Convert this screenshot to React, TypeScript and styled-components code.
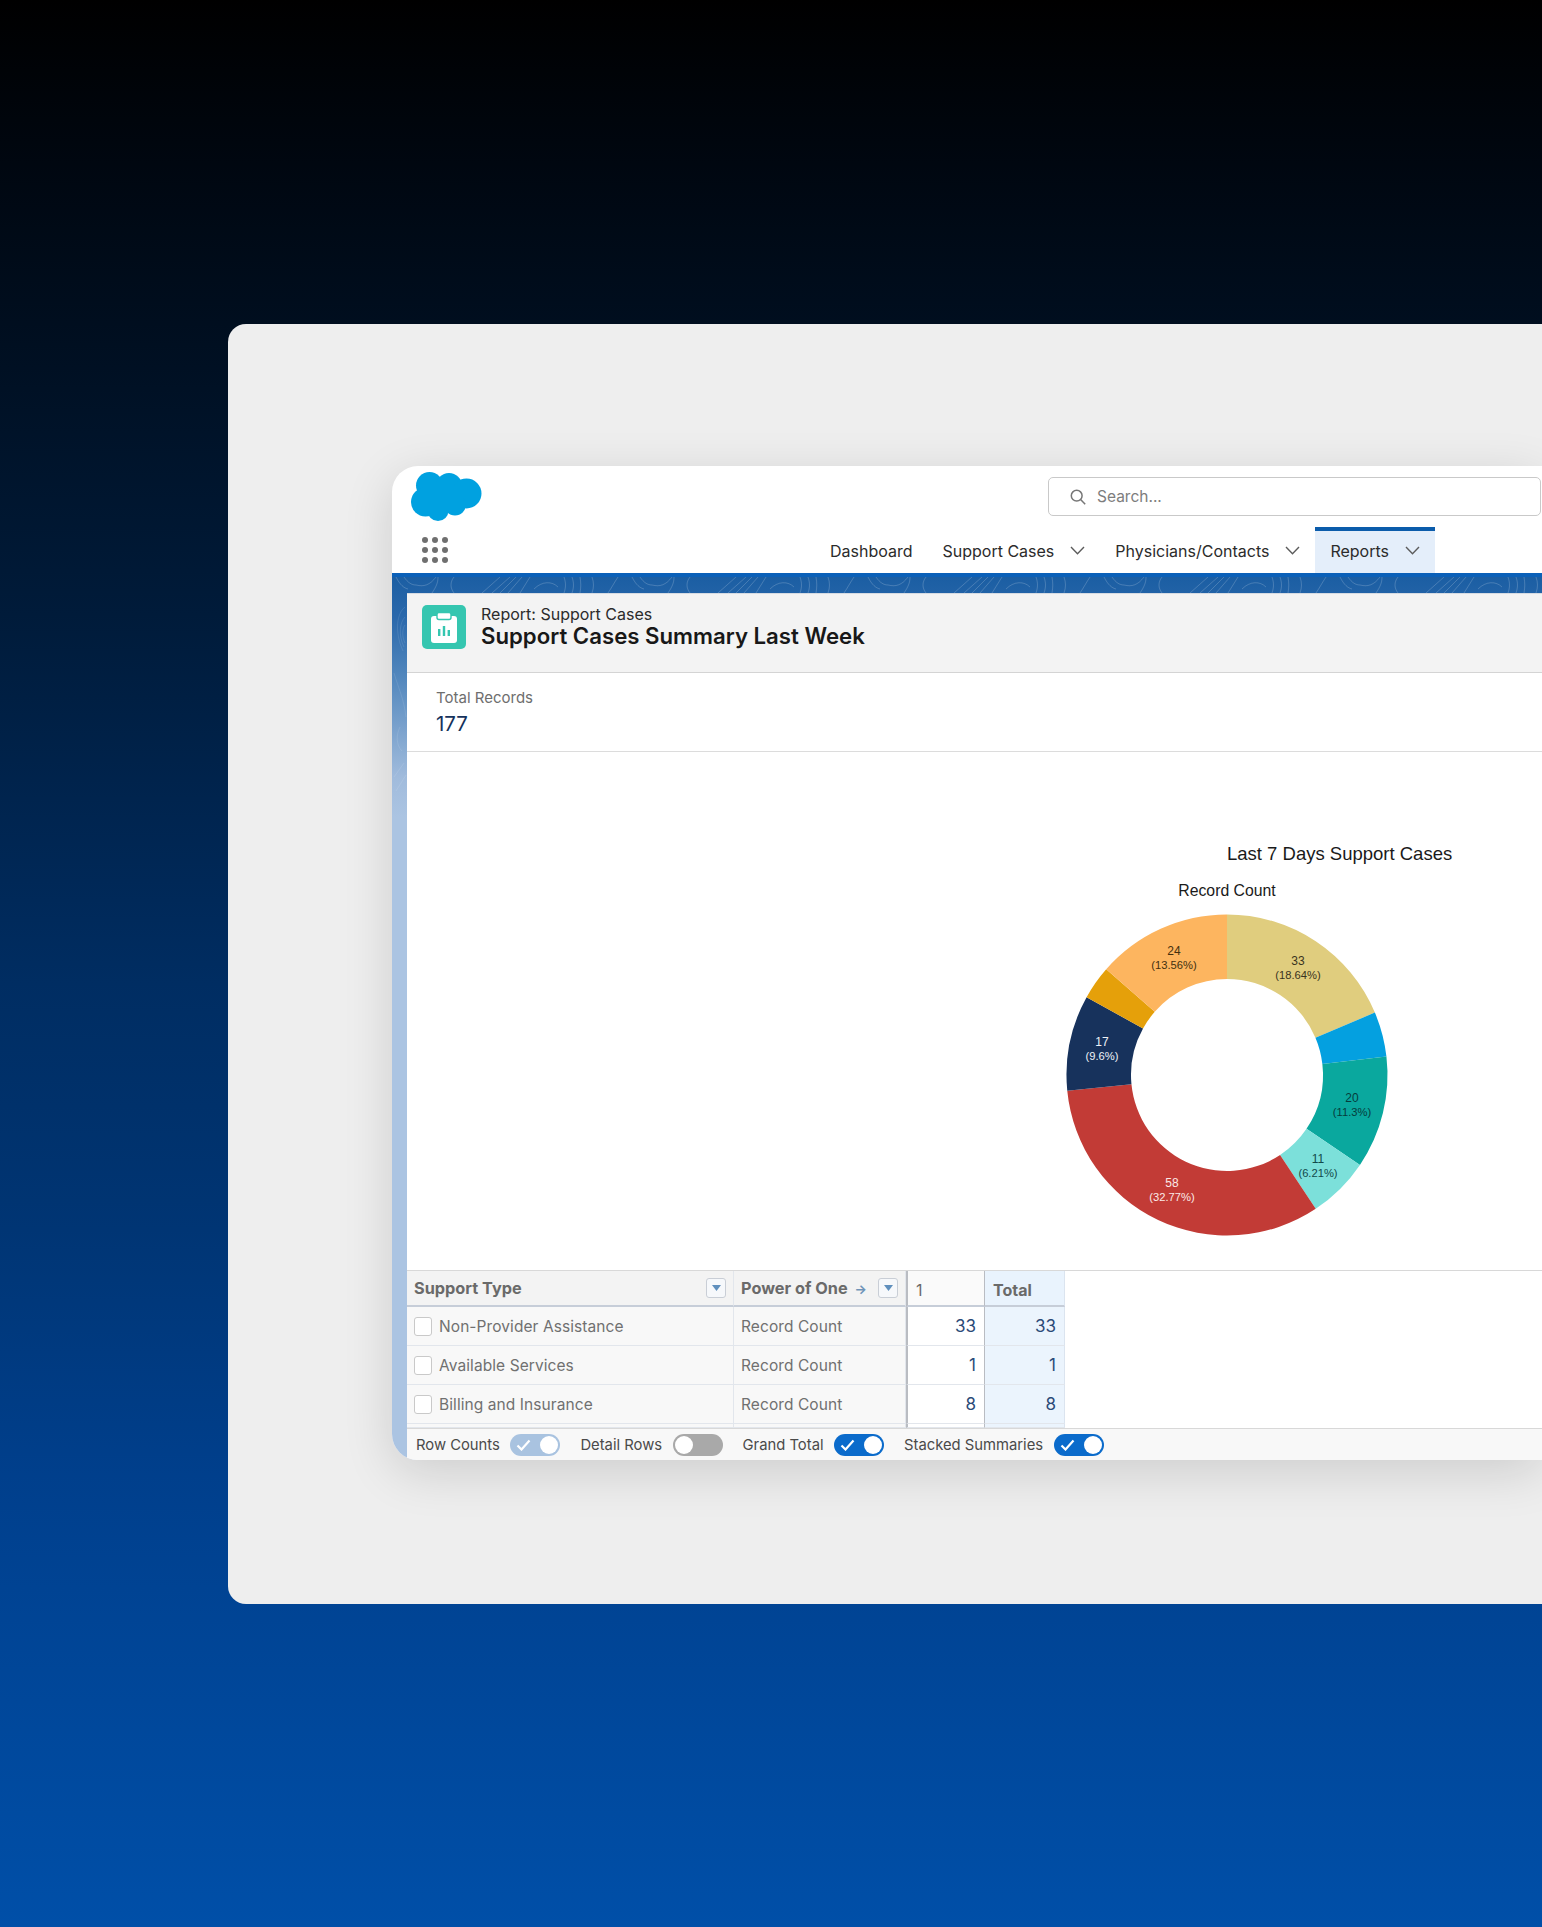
import React from 'react'
import styled, { createGlobalStyle } from 'styled-components'

const FONT = `Inter, "Liberation Sans", Arial, sans-serif`
const CHART_FONT = `"Liberation Sans", Arial, sans-serif`

const GlobalStyle = createGlobalStyle`
  html, body { margin: 0; padding: 0; background: #000; }
  * { box-sizing: border-box; }
`

// donut data, clockwise from 12 o'clock
const slices = [
  { value: 33, color: '#e0cd7e' },
  { value: 8, color: '#04a0e0' },
  { value: 20, color: '#0aa89e' },
  { value: 11, color: '#7ce0da' },
  { value: 58, color: '#c23b36' },
  { value: 17, color: '#17325c' },
  { value: 6, color: '#e5a00a' },
  { value: 24, color: '#fdb55f' },
]

const labels = [
  { x: 237, y: 135, a: '33', b: '(18.64%)', fill: '#3a3420' },
  { x: 291, y: 272, a: '20', b: '(11.3%)', fill: '#063c3c' },
  { x: 257, y: 333, a: '11', b: '(6.21%)', fill: '#12494a' },
  { x: 111, y: 357, a: '58', b: '(32.77%)', fill: '#fbe9e7' },
  { x: 41, y: 216, a: '17', b: '(9.6%)', fill: '#eef2f7' },
  { x: 113, y: 125, a: '24', b: '(13.56%)', fill: '#43300f' },
]

const rows = [
  { name: 'Non-Provider Assistance', count: 33 },
  { name: 'Available Services', count: 1 },
  { name: 'Billing and Insurance', count: 8 },
]

function slicePath(cx: number, cy: number, r1: number, r2: number, from: number, to: number) {
  const p = (r: number, t: number) => {
    const a = (t - 90) * Math.PI / 180
    return `${(cx + r * Math.cos(a)).toFixed(2)} ${(cy + r * Math.sin(a)).toFixed(2)}`
  }
  const large = to - from > 180 ? 1 : 0
  return `M${p(r2, from)} A${r2} ${r2} 0 ${large} 1 ${p(r2, to)} L${p(r1, to)} A${r1} ${r1} 0 ${large} 0 ${p(r1, from)} Z`
}

const Donut = () => {
  const total = slices.reduce((s, x) => s + x.value, 0)
  let angle = 0
  return (
    <ChartSvg viewBox="0 0 440 420" width="440" height="420">
      <text x="166" y="30" fontSize="18.5" fill="#1a1a1a">Last 7 Days Support Cases</text>
      <text x="166" y="66" fontSize="15.8" fill="#1a1a1a" textAnchor="middle">Record Count</text>
      {slices.map((s) => {
        const from = angle
        angle += (s.value / total) * 360
        return <path key={s.color} d={slicePath(166, 245, 96, 160.5, from, angle)} fill={s.color} />
      })}
      {labels.map((l) => (
        <g key={l.a} textAnchor="middle" fill={l.fill}>
          <text x={l.x} y={l.y} fontSize="12">{l.a}</text>
          <text x={l.x} y={l.y + 13.5} fontSize="11.2">{l.b}</text>
        </g>
      ))}
    </ChartSvg>
  )
}

const Chevron = () => (
  <svg width="15" height="9" viewBox="0 0 15 9" fill="none" stroke="#5c5c5c" strokeWidth="1.4">
    <path d="M1 1l6.5 6.8L14 1" />
  </svg>
)

const Toggle = ({ on, faded }: { on?: boolean; faded?: boolean }) => (
  <ToggleTrack $on={on} $faded={faded}>
    {on && (
      <svg width="15" height="12" viewBox="0 0 15 12" fill="none" stroke="#fff" strokeWidth="2.2">
        <path d="M1.5 6.5l4 4 8-9" />
      </svg>
    )}
    <ToggleKnob />
  </ToggleTrack>
)

const FilterButton = () => (
  <FilterBox>
    <svg width="9" height="6" viewBox="0 0 9 6"><path d="M0 0h9L4.5 6z" fill="#5f8fbd" /></svg>
  </FilterBox>
)

const App = () => (
  <Page>
    <GlobalStyle />
    <Panel>
      <Window>
        <TopRow>
          <Logo viewBox="0 0 71 49" width="71" height="49" fill="#00a1e0">
            <circle cx="18.5" cy="13.5" r="13.5" />
            <circle cx="38" cy="14" r="13" />
            <circle cx="55.5" cy="21.5" r="15" />
            <circle cx="14.5" cy="30" r="14.5" />
            <circle cx="27" cy="38.5" r="10.5" />
            <circle cx="44" cy="32.5" r="11" />
            <rect x="16" y="14" width="36" height="24" />
          </Logo>
          <SearchBox>
            <svg width="16" height="16" viewBox="0 0 16 16" fill="none" stroke="#777" strokeWidth="1.5">
              <circle cx="6.7" cy="6.7" r="5.4" />
              <path d="M10.6 10.6l4.6 4.7" />
            </svg>
            <SearchText>Search...</SearchText>
          </SearchBox>
        </TopRow>
        <NavRow>
          <AppGrid viewBox="0 0 26 26" width="26" height="26" fill="#6f6f6f">
            {[3, 13, 23].map((y) => [3, 13, 23].map((x) => <circle key={`${x}-${y}`} cx={x} cy={y} r="3" />))}
          </AppGrid>
          <NavList>
            <NavItem>Dashboard</NavItem>
            <NavItem>Support Cases <Chevron /></NavItem>
            <NavItem>Physicians/Contacts <Chevron /></NavItem>
            <NavItem $active>Reports <Chevron /></NavItem>
          </NavList>
        </NavRow>
        <Stage>
          <Texture width="1150" height="240" aria-hidden="true">
            <defs>
              <pattern id="rings" width="236" height="16" patternUnits="userSpaceOnUse">
                <g fill="none" stroke="#fff" strokeOpacity=".18" strokeWidth="1">
                  <path d="M4 0c4 8 8 11 12 12M12 0c4 6 8 8 12 8M24 8c8 2 14 0 20-8M40 16c4-6 6-10 6-16M62 16c-4-5-4-11 0-16" />
                  <path d="M90 16l18-16M100 16l18-16M108 16l16-16M116 16l14-16M128 16l10-16M142 12c8-8 18-8 24-2M172 16c2-6 2-10 0-16M180 16c2-6 2-10 0-16M188 16c1-6 1-10 0-16M200 16c2-6 2-10 0-16M216 16c4-6 6-10 10-16" />
                </g>
              </pattern>
            </defs>
            <rect width="1150" height="16" fill="url(#rings)" />
            <g fill="none" stroke="#fff" strokeOpacity=".1" strokeWidth="1">
              <path d="M13 30c-8 6-11 24-2 44M13 40c-5 5-7 18-1 30M13 48c-3 4-3 12 0 18M2 96c4 14 10 26 12 44M8 150c-4 8-4 18 2 24M2 200l10-14M4 214l10-16" />
            </g>
          </Texture>
          <Content>
            <PageHeader>
              <HeaderIcon viewBox="0 0 44 44" width="44" height="44">
                <rect width="44" height="44" rx="5" fill="#35c6b0" />
                <rect x="9" y="11" width="26" height="27" rx="3" fill="#fff" />
                <rect x="15" y="7.5" width="14" height="7" rx="2" fill="#fff" stroke="#35c6b0" strokeWidth="1.4" />
                <path d="M16 24h2.4v7H16zM20.8 21h2.4v10h-2.4zM25.6 25h2.4v6h-2.4z" fill="#35c6b0" />
              </HeaderIcon>
              <div>
                <ObjectName>Report: Support Cases</ObjectName>
                <ReportTitle>Support Cases Summary Last Week</ReportTitle>
              </div>
            </PageHeader>
            <Stats>
              <StatLabel>Total Records</StatLabel>
              <StatValue>177</StatValue>
            </Stats>
            <ChartArea>
              <Donut />
            </ChartArea>
            <Table>
              <HeadCell>
                Support Type
                <FilterButton />
              </HeadCell>
              <HeadCell>
                <span>Power of One <HeadArrow>→</HeadArrow></span>
                <FilterButton />
              </HeadCell>
              <ValueHead>1</ValueHead>
              <TotalHead>Total</TotalHead>
              {rows.map((r) => (
                <React.Fragment key={r.name}>
                  <NameCell><Checkbox />{r.name}</NameCell>
                  <NameCell>Record Count</NameCell>
                  <NumberCell>{r.count}</NumberCell>
                  <NumberCell $total>{r.count}</NumberCell>
                </React.Fragment>
              ))}
              <NameCell />
              <NameCell />
              <NumberCell />
              <NumberCell $total />
            </Table>
            <Footer>
              <FooterLabel>Row Counts</FooterLabel>
              <Toggle on faded />
              <FooterLabel>Detail Rows</FooterLabel>
              <Toggle />
              <FooterLabel>Grand Total</FooterLabel>
              <Toggle on />
              <FooterLabel>Stacked Summaries</FooterLabel>
              <Toggle on />
            </Footer>
          </Content>
        </Stage>
      </Window>
    </Panel>
  </Page>
)

const Page = styled.div`
  width: 1542px;
  height: 1927px;
  overflow: hidden;
  padding: 324px 0 0 228px;
  font-family: ${FONT};
  background: linear-gradient(180deg, #000 0, #00050c 120px, #001b3a 614px, #002d62 983px, #003574 1229px, #003f8c 1475px, #004fa8 1927px);
`

const Panel = styled.div`
  width: 1314px;
  height: 1280px;
  padding: 142px 0 0 164px;
  background: #eeeeee;
  border-radius: 18px 0 0 18px;
`

const Window = styled.div`
  display: flex;
  flex-direction: column;
  width: 1150px;
  height: 994px;
  overflow: hidden;
  background: #fff;
  border-radius: 26px 0 0 26px;
  box-shadow: 0 12px 50px rgba(0, 0, 0, 0.14);
`

const TopRow = styled.div`
  display: flex;
  justify-content: space-between;
  align-items: flex-start;
  height: 61px;
  padding: 6px 1px 0 19px;
`

const Logo = styled.svg`
  display: block;
`

const SearchBox = styled.div`
  display: flex;
  align-items: center;
  gap: 11px;
  width: 493px;
  height: 39px;
  margin-top: 5px;
  padding-left: 21px;
  background: #fff;
  border: 1px solid #c9c9c9;
  border-radius: 5px;
`

const SearchText = styled.span`
  font-size: 15.5px;
  color: #7d7d7d;
`

const NavRow = styled.div`
  display: flex;
  justify-content: space-between;
  align-items: stretch;
  height: 46px;
  padding: 0 107px 0 30px;
`

const AppGrid = styled.svg`
  display: block;
  margin-top: 10px;
`

const NavList = styled.div`
  display: flex;
`

const NavItem = styled.div<{ $active?: boolean }>`
  display: flex;
  align-items: center;
  gap: 16px;
  padding: 0 15px 3px;
  font-size: 16px;
  color: #2b2b2b;
  background: ${(p) => (p.$active ? '#e4eefa' : 'transparent')};
  border-top: 4px solid ${(p) => (p.$active ? '#0b5cab' : 'transparent')};
`

const Stage = styled.div`
  position: relative;
  flex: 1;
  display: flex;
  min-height: 0;
  padding: 16px 0 0 15px;
  border-top: 4px solid #0b60b8;
  background: linear-gradient(180deg, #1b5ea3 0, #2a68ab 40px, #5287bd 100px, #a0bbdc 200px, #abc4e2 240px);
`

const Texture = styled.svg`
  position: absolute;
  left: 0;
  top: 0;
`

const Content = styled.div`
  position: relative;
  flex: 1;
  display: flex;
  flex-direction: column;
  min-width: 0;
  background: #fff;
`

const PageHeader = styled.div`
  display: flex;
  gap: 15px;
  height: 80px;
  padding: 11px 0 0 15px;
  background: #f3f3f3;
  border-top: 1px solid #d6dbe2;
  border-bottom: 1px solid #d4d4d4;
`

const HeaderIcon = styled.svg`
  display: block;
  flex: none;
`

const ObjectName = styled.div`
  margin-top: -1px;
  font-size: 16px;
  line-height: 20px;
  color: #2b2b2b;
`

const ReportTitle = styled.div`
  font-size: 22.2px;
  line-height: 23px;
  font-weight: 600;
  color: #181818;
`

const Stats = styled.div`
  height: 79px;
  padding: 15px 0 0 29px;
  border-bottom: 1px solid #dcdcdc;
`

const StatLabel = styled.div`
  font-size: 15px;
  line-height: 20px;
  color: #6e6e6e;
`

const StatValue = styled.div`
  margin-top: 2px;
  font-size: 20.5px;
  line-height: 28px;
  color: #16325c;
`

const ChartArea = styled.div`
  height: 519px;
  padding: 78px 0 0 654px;
  border-bottom: 1px solid #d8d8d8;
`

const ChartSvg = styled.svg`
  display: block;
  font-family: ${CHART_FONT};
`

const Table = styled.div`
  display: grid;
  grid-template-columns: 327px 172px 79px 80px;
  grid-template-rows: 36px 39px 39px 39px 4px;
  height: 157px;
  width: 658px;
  overflow: hidden;
`

const HeadCell = styled.div`
  display: flex;
  justify-content: space-between;
  align-items: center;
  padding: 0 7px 0 7px;
  font-size: 16.3px;
  font-weight: 700;
  color: #6a6a6a;
  background: #f3f3f3;
  border-right: 1px solid #e2e6ec;
  border-bottom: 2px solid #c6cdd8;
`

const HeadArrow = styled.span`
  margin-left: 3px;
  font-size: 13px;
  color: #6f93b8;
`

const FilterBox = styled.div`
  display: flex;
  align-items: center;
  justify-content: center;
  width: 20px;
  height: 20px;
  background: #f6f8fb;
  border: 1px solid #c9ced6;
  border-radius: 3px;
`

const ValueHead = styled.div`
  display: flex;
  align-items: center;
  padding: 3px 0 0 8px;
  font-size: 16px;
  color: #6a6a6a;
  background: #fafafa;
  border-left: 2px solid #b9bcc2;
  border-right: 1px solid #b9bcc2;
  border-bottom: 2px solid #c6cdd8;
`

const TotalHead = styled.div`
  display: flex;
  align-items: center;
  padding: 3px 0 0 8px;
  font-size: 16px;
  font-weight: 700;
  color: #6a6a6a;
  background: #e9f3fd;
  border-right: 1px solid #dbe4ef;
  border-bottom: 2px solid #c6cdd8;
`

const NameCell = styled.div`
  display: flex;
  align-items: center;
  gap: 7px;
  padding-left: 7px;
  font-size: 15.5px;
  letter-spacing: 0.08px;
  color: #707070;
  background: #f8f8f8;
  border-right: 1px solid #e2e6ec;
  border-bottom: 1px solid #e2e6ec;
`

const Checkbox = styled.span`
  width: 18px;
  height: 19px;
  background: #fff;
  border: 1px solid #c9c9c9;
  border-radius: 3px;
`

const NumberCell = styled.div<{ $total?: boolean }>`
  padding: 0 8px 0 0;
  font-size: 17px;
  line-height: 38px;
  text-align: right;
  color: #2b4a78;
  background: ${(p) => (p.$total ? '#ebf4fd' : '#fff')};
  border-left: ${(p) => (p.$total ? '0' : '2px solid #b9bcc2')};
  border-right: 1px solid ${(p) => (p.$total ? '#dbe4ef' : '#b9bcc2')};
  border-bottom: 1px solid #e2e6ec;
`

const Footer = styled.div`
  display: flex;
  align-items: center;
  height: 32px;
  padding-left: 9px;
  background: #f8f8f8;
  border-top: 1px solid #d8d8d8;
`

const FooterLabel = styled.span`
  margin-right: 10.5px;
  font-size: 14.8px;
  color: #4a4a4a;
`

const ToggleTrack = styled.div<{ $on?: boolean; $faded?: boolean }>`
  display: flex;
  align-items: center;
  justify-content: ${(p) => (p.$on ? 'space-between' : 'flex-start')};
  flex: none;
  width: 50px;
  height: 22px;
  margin-right: 20px;
  padding: ${(p) => (p.$on ? '0 2px 0 6px' : '0 2px')};
  border-radius: 11px;
  background: ${(p) => (p.$faded ? '#a9c3e0' : p.$on ? '#0b6bcb' : '#a9a9a9')};
`

const ToggleKnob = styled.span`
  width: 18px;
  height: 18px;
  background: #fff;
  border-radius: 50%;
`

export default App
